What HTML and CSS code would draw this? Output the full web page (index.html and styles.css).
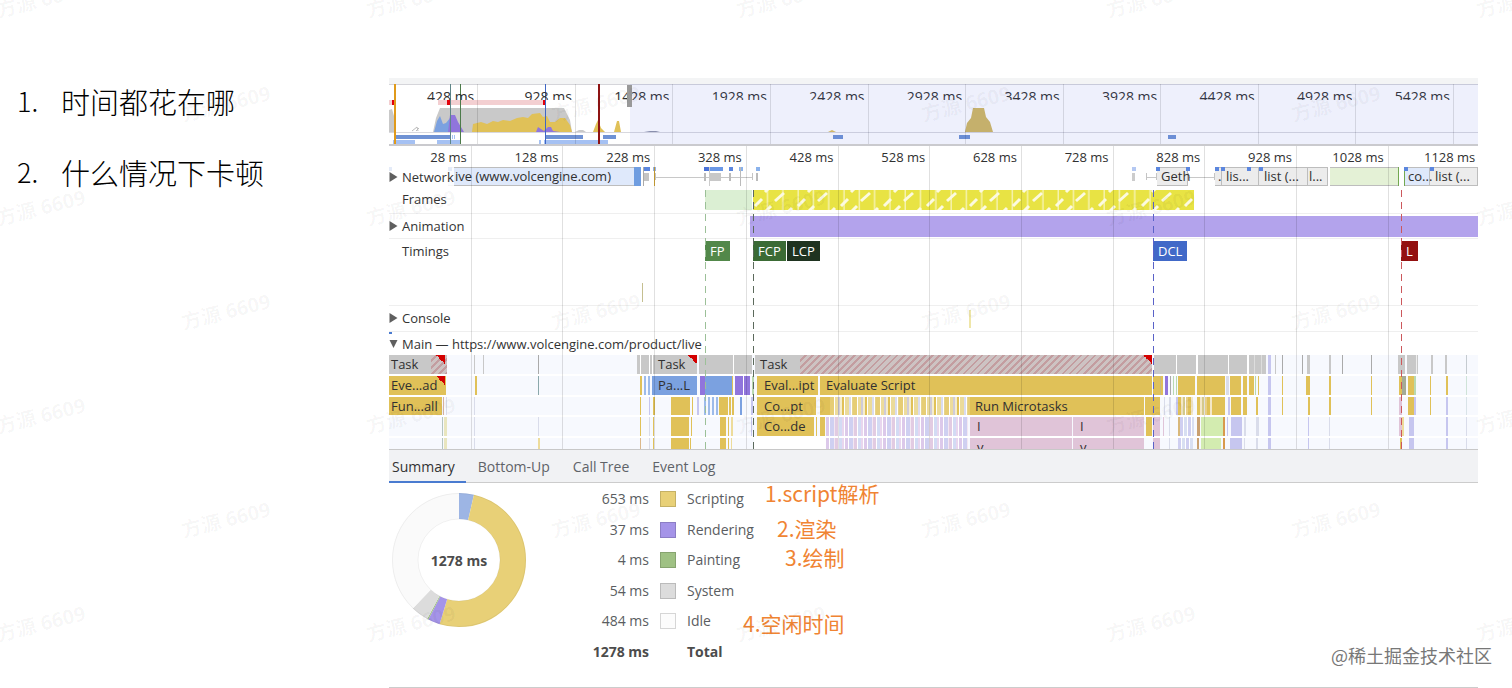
FILE: index.html
```html
<!DOCTYPE html>
<html lang="zh-CN">
<head>
    <meta charset="UTF-8">
    <meta name="viewport" content="width=device-width, initial-scale=1.0">
    <title>Performance</title>
    <link rel="stylesheet" href="styles.css">
</head>
<body>
    <main class="slide">
        <ol class="questions">
            <li>时间都花在哪</li>
            <li>什么情况下卡顿</li>
        </ol>

        <section class="panel">
            <div class="overview">
                <svg class="overview-graph" viewBox="0 0 1089 60" preserveAspectRatio="none">
                    <path fill="#c9c9c9" d="M0 26L3 25L5 32V48H0ZM44 48L47 34L51 24H175L181 36L183 48Z"/>
                    <path fill="#7ba1e0" d="M45 48L48 37L51 32L54 40L57 39L61 34L66 48Z"/>
                    <path fill="#9075dc" d="M59 48L61 31H66L69 38L75 48Z"/>
                    <path fill="#e0c158" d="M83 48L84 40L92 38L98 40L104 37L109 38L114 36L121 37L128 34L134 33L139 34L143 30L151 29L154 33L158 32L161 38L166 38L171 34L176 34L181 41L183 48Z"/>
                    <path fill="#9075dc" d="M147 48L149 43L152 45L155 47L159 43H162L164 47L171 48Z"/>
                    <path fill="#e0c158" d="M204 48L207 40L209 36L212 44L216 48ZM225 48L228 37H230L232 48ZM439 48L443 46L447 48Z"/>
                    <path fill="#c9c9c9" d="M186 48L190 46H194L197 48Z"/>
                    <path fill="#8f93a8" d="M255 48L261 47H267L271 48Z"/>
                    <path fill="none" stroke="#bbb" d="M23 47L28 43L29 47M27 47L30 44"/>
                    <path fill="#d2b85f" d="M576 48L578 39L582 34L584 24H595L597 33L601 38L604 48Z"/>
                    <path fill="#d8d8de" d="M0 48H1089V49H0Z"/>
                    <path fill="#f3cfd1" d="M0 16H4V21H0ZM49 16H155V21H49Z"/>
                    <path fill="#e3000b" d="M3 16H6V21H3ZM58 16H61V21H58ZM154 16H156V21H154Z"/>
                    <path fill="#6f92d4" d="M7 51H61V55H7ZM157 51H194V55H157ZM214 51H227V55H214ZM444 51H454V55H444ZM570 51H581V55H570ZM779 51H787V55H779Z"/>
                    <path fill="#a5c1f3" d="M4 56H26V60H4ZM48 56H71V60H48ZM150 56H152V60H150ZM155 56H219V60H155ZM63 51H64V55H63ZM65 51H66V55H65Z"/>
                    <path fill="#e09a1b" d="M5 0H7V60H5Z"/>
                    <path fill="#5e8587" d="M61 0H62V60H61Z"/>
                    <path fill="#4c7a4a" d="M71 0H72V60H71Z"/>
                    <path fill="#3f66c4" d="M156 0H157V60H156Z"/>
                    <path fill="#8e1313" d="M209 0H211V60H209Z"/>
                </svg>
                <div class="overview-labels" id="overview-labels"></div>
                <div class="overview-outside"></div>
                <div class="overview-handle"></div>
            </div>

            <div class="timeline">
                <div class="ruler" id="ruler"></div>

                <div class="track network">
                    <div class="lane" id="network"></div>
                    <button class="track-name masked"><svg viewBox="0 0 8 10"><path d="M0 0L8 5L0 10Z"/></svg>Network</button>
                </div>
                <div class="track frames">
                    <div class="lane" id="frames">
                        <svg class="dropped">
                            <defs>
                                <pattern id="dashes" width="43" height="20" patternUnits="userSpaceOnUse">
                                    <path d="M2 16L9 9M22 11L31 3M13 21L18 16M36 21L39 18M12 2L15 -1" fill="none" stroke="#fcfae0" stroke-width="3"/>
                                </pattern>
                                <pattern id="cells" width="15.3" height="20" patternUnits="userSpaceOnUse">
                                    <rect x="14" width="1" height="20" fill="#fcfae0"/>
                                </pattern>
                            </defs>
                            <rect width="100%" height="20" fill="#e8e344"/>
                            <rect width="100%" height="20" fill="url(#dashes)"/>
                            <rect width="91%" height="20" fill="url(#cells)"/>
                        </svg>
                    </div>
                    <span class="track-name">Frames</span>
                </div>
                <div class="track animation">
                    <div class="lane" id="animation"></div>
                    <button class="track-name"><svg viewBox="0 0 8 10"><path d="M0 0L8 5L0 10Z"/></svg>Animation</button>
                </div>
                <div class="track timings">
                    <div class="lane" id="timings"></div>
                    <span class="track-name">Timings</span>
                </div>
                <div class="track console">
                    <div class="lane" id="console"></div>
                    <button class="track-name"><svg viewBox="0 0 8 10"><path d="M0 0L8 5L0 10Z"/></svg>Console</button>
                </div>
                <div class="track main-track">
                    <div class="lane" id="main-top"></div>
                    <button class="track-name"><svg viewBox="0 0 8 10"><path d="M0 1H8L4 9Z"/></svg>Main — https://www.volcengine.com/product/live</button>
                </div>
                <div class="flame" id="flame"></div>
                <div class="markers" id="markers"></div>
            </div>

            <nav class="tabs">
                <button class="tab active">Summary</button>
                <button class="tab">Bottom-Up</button>
                <button class="tab">Call Tree</button>
                <button class="tab">Event Log</button>
            </nav>

            <div class="summary">
                <div class="donut">
                    <svg viewBox="0 0 134 134">
                        <g id="donut" fill="none" stroke-width="26" transform="rotate(-90 67 67)"></g>
                        <circle cx="67" cy="67" r="66.5" fill="none" stroke="#000" stroke-opacity=".05"/>
                        <circle cx="67" cy="67" r="41" fill="none" stroke="#000" stroke-opacity=".05"/>
                    </svg>
                    <strong>1278 ms</strong>
                </div>
                <table class="legend">
                    <tr><td>653 ms</td><td><i class="swatch scripting"></i></td><td>Scripting</td></tr>
                    <tr><td>37 ms</td><td><i class="swatch rendering"></i></td><td>Rendering</td></tr>
                    <tr><td>4 ms</td><td><i class="swatch painting"></i></td><td>Painting</td></tr>
                    <tr><td>54 ms</td><td><i class="swatch system"></i></td><td>System</td></tr>
                    <tr><td>484 ms</td><td><i class="swatch idle"></i></td><td>Idle</td></tr>
                    <tr class="total"><td>1278 ms</td><td></td><td>Total</td></tr>
                </table>
                <p class="note note-script">1.script解析</p>
                <p class="note note-render">2.渲染</p>
                <p class="note note-paint">3.绘制</p>
                <p class="note note-idle">4.空闲时间</p>
            </div>
        </section>
    </main>

    <div class="watermarks" id="watermarks" aria-hidden="true"></div>
    <p class="credit">@稀土掘金技术社区</p>

    <script src="script.js"></script>
</body>
</html>
```
FILE: styles.css
```css
*{
    box-sizing: border-box;
}
body{
    margin: 0;
    position: relative;
    min-height: 100vh;
    overflow: hidden;
    background-color: #fff;
    font-family: "Open Sans", "Noto Sans", "Noto Sans CJK SC", sans-serif;
    font-size: 13px;
    color: #303030;
}
button{
    border: 0;
    padding: 0;
    background: none;
    font: inherit;
    color: inherit;
}
p{
    margin: 0;
}
.slide{
    display: grid;
    grid-template-columns: 389px 1fr;
    padding: 78px 34px 0 0;
}

/* left column */
.questions{
    margin: 0;
    padding: 2px 0 0 17px;
    list-style: none;
    counter-reset: question;
    font-family: "Noto Sans CJK SC", sans-serif;
    font-size: 29px;
    font-weight: 300;
    line-height: 42px;
    color: #000;
}
.questions li{
    display: flex;
    margin-bottom: 29px;
    counter-increment: question;
}
.questions li::before{
    content: counter(question) ".";
    width: 44px;
    font-size: 27px;
}

/* overview */
.panel{
    min-width: 0;
    border-bottom: 1px solid #ccc;
}
.overview{
    position: relative;
    height: 68px;
    border-top: 6px solid #f3f4f5;
    border-bottom: 2px solid #cacace;
    box-shadow: inset 0 1px #d5d5da;
}
.overview-graph{
    display: block;
    width: 100%;
    height: 60px;
}
.overview-labels{
    position: absolute;
    inset: 0;
    display: flex;
    overflow: hidden;
    font-size: 14px;
}
.overview-labels span{
    flex: 0 0 8.96%;
    padding-right: 3px;
    border-right: 1px solid rgba(0,0,0,0.12);
    text-align: right;
}
.overview-labels span:first-child{
    flex-basis: 8.2%;
}
.overview-labels b{
    display: block;
    height: 16px;
    padding-top: 4px;
    overflow: hidden;
    font-weight: normal;
    line-height: 18px;
    white-space: nowrap;
}
.overview-outside{
    position: absolute;
    inset: 0 0 0 22.1%;
    background-color: rgba(90,110,225,0.1);
}
.overview-handle{
    position: absolute;
    left: 21.9%;
    top: 1px;
    width: 5px;
    height: 22px;
    background-color: #999;
}

/* timeline */
.timeline{
    position: relative;
    padding-top: 20px;
    border-bottom: 1px solid #c8c8c8;
}
.ruler{
    position: absolute;
    inset: 0;
    display: flex;
    overflow: hidden;
    z-index: 2;
    pointer-events: none;
}
.ruler span{
    flex: 0 0 8.42%;
    padding: 2px 4px 0 0;
    border-right: 1px solid rgba(0,0,0,0.12);
    line-height: 18px;
    text-align: right;
    white-space: nowrap;
}
.ruler span:first-child{
    flex-basis: 7.6%;
}
.track{
    display: grid;
    border-bottom: 1px solid #efefef;
}
.track > *{
    grid-area: 1 / 1;
}
.track-name{
    position: relative;
    display: flex;
    align-items: center;
    justify-self: start;
    align-self: start;
    height: 24px;
    padding-left: 13px;
    color: #333;
}
.track-name svg{
    width: 9px;
    height: 10px;
    margin: 0 4px 0 -13px;
    fill: #5f5f5f;
}
.network{
    height: 21px;
    border-bottom: 0;
}
.network .track-name{
    height: 21px;
}
.masked{
    background-color: rgba(255,255,255,0.85);
}
.frames{
    height: 27px;
}
.animation{
    height: 25px;
}
.timings{
    height: 67px;
}
.console{
    height: 26px;
}
.main-track{
    height: 23px;
    border-bottom: 0;
}
.lane{
    position: relative;
    overflow: hidden;
}
.lane i, .flame i, .markers i{
    position: absolute;
    top: 0;
    height: 100%;
}
.lane span, .flame span{
    position: absolute;
    top: 0;
    line-height: 19px;
    white-space: nowrap;
}
.network i{
    top: 1px;
    height: 19px;
}
.network span{
    top: 1px;
}
.network .dot{
    height: 4px;
}
.network .wait{
    top: 7px;
    height: 8px;
}
.network .whisker{
    top: 7px;
    height: 7px;
    border: solid #c4c4c4;
    border-width: 0 1px;
    background: linear-gradient(#c8c8c8, #c8c8c8) 0 4px / 100% 1px no-repeat;
}
.network .request{
    border: 1px solid #bdbdbd;
    border-width: 1px 1px 1px 0;
}
.frames i{
    top: 3px;
    height: 20px;
}
.dropped{
    position: absolute;
    left: 33.43%;
    top: 3px;
    width: 40.5%;
    height: 20px;
}
.animation i{
    top: 2px;
    height: 21px;
}
.timings .measure{
    top: 44px;
    height: 19px;
}
.timings .badge{
    top: 2px;
    padding: 0 5px;
    line-height: 20px;
    color: #fff;
}
.console i{
    top: 4px;
    height: 18px;
}
.main-track i{
    height: 2px;
}

/* flame chart */
.flame{
    display: grid;
    grid-template-rows: 21px 21px 20px 21px 11px;
    overflow: hidden;
    background-color: #f7f9fe;
}
.row{
    position: relative;
    overflow: hidden;
    border-bottom: 2px solid #fff;
}
.row:last-child{
    border-bottom: 0;
}
.hatched{
    background-image: repeating-linear-gradient(135deg, #cdc3c3 0 3px, #c39da0 3px 5px);
}
.flame .corner{
    height: 9px;
    background: linear-gradient(to top right, transparent 50%, #d30000 50%);
}
.stripes-parse{
    background-image: repeating-linear-gradient(90deg, #9dbbea 0 2px, #f7f9fe 2px 4px);
}
.stripes-script{
    background-image: repeating-linear-gradient(90deg, #e6cd75 0 4px, #fff 4px 5px, #eddc9b 5px 8px, #d0ccd8 8px 10px, #f5edcd 10px 12px, #e0c158 12px 14px, #fff 14px 15px, #ebdb9a 15px 19px, #d9dcef 19px 21px, #fff 21px 22px, #e6d38a 22px 23px);
}
.stripes-call{
    background-image: repeating-linear-gradient(90deg, #dcc9ea 0 3px, #fff 3px 4px, #cfd0f1 4px 8px, #f3e7f2 8px 9px, #e2cbe2 9px 12px, #fff 12px 13px, #d3dbf4 13px 16px, #e8d6ee 16px 18px, #fff 18px 19px);
}
.stripes-mixed{
    background-image: repeating-linear-gradient(90deg, #e0c158 0 3px, #f3e7c8 3px 5px, #d5c98b 5px 7px, #fff 7px 8px, #e8cf86 8px 10px);
}
.stripes-lilac{
    background-image: repeating-linear-gradient(90deg, #cfcff1 0 3px, #fff 3px 4px, #d8dff2 4px 7px, #fff 7px 8px);
}
.markers{
    position: absolute;
    inset: 44px 0 0;
    pointer-events: none;
    z-index: 3;
}
.markers i{
    width: 1px;
    -webkit-mask-image: repeating-linear-gradient(#000 0 7px, transparent 7px 12px);
    mask-image: repeating-linear-gradient(#000 0 7px, transparent 7px 12px);
}

/* tabs */
.tabs{
    display: flex;
    height: 33px;
    border-bottom: 1px solid #ccc;
    background-color: #f1f2f4;
    font-size: 14px;
    color: #5f6368;
}
.tab{
    height: 33px;
    padding: 2px 11px 0 12px;
    border-bottom: 2px solid transparent;
}
.tab.active{
    padding-left: 3px;
    border-color: #4a7bd0;
    color: #333;
}

/* summary */
.summary{
    position: relative;
    display: flex;
    gap: 59px;
    height: 204px;
    padding: 1px 0 0 3px;
    font-size: 14px;
    color: #5a5d61;
}
.donut{
    display: grid;
    align-self: start;
    width: 134px;
    margin-top: 9px;
    place-items: center;
}
.donut > *{
    grid-area: 1 / 1;
}
.donut svg{
    width: 100%;
}
.donut strong{
    color: #4c4c4c;
}
.legend{
    align-self: start;
    border-collapse: collapse;
}
.legend td{
    height: 30px;
    padding: 0;
    line-height: 20px;
}
.legend tr:nth-child(even) td{
    height: 31px;
}
.legend td:first-child{
    width: 64px;
    text-align: right;
    white-space: nowrap;
}
.legend td:nth-child(2){
    padding: 0 11px;
    width: 38px;
}
.total{
    font-weight: bold;
    color: #4c4c4c;
}
.swatch{
    display: block;
    width: 16px;
    height: 16px;
    border: 1px solid rgba(0,0,0,0.15);
}
.scripting{
    background-color: #e8d077;
}
.rendering{
    background-color: #a594e8;
}
.painting{
    background-color: #9fc184;
}
.system{
    background-color: #dcdcdc;
}
.idle{
    background-color: #fcfcfc;
}
.note{
    position: absolute;
    font-family: "Noto Sans CJK SC", sans-serif;
    font-size: 21px;
    line-height: 24px;
    color: #f08433;
}
.note-script{
    left: 376px;
    top: -2px;
}
.note-render{
    left: 388px;
    top: 33px;
}
.note-paint{
    left: 396px;
    top: 62px;
}
.note-idle{
    left: 354px;
    top: 128px;
}

/* watermarks */
.watermarks{
    position: absolute;
    inset: -52px 0 0 -144px;
    overflow: hidden;
    pointer-events: none;
    z-index: 4;
}
.watermark-row{
    display: flex;
    height: 104px;
}
.watermark-row:nth-child(even){
    margin-left: 185px;
}
.watermark-row span{
    flex: 0 0 370px;
    font-size: 20px;
    font-weight: bold;
    line-height: 104px;
    text-align: center;
    color: rgba(0,0,0,0.04);
    transform: rotate(-14deg);
}
.credit{
    position: absolute;
    right: 20px;
    bottom: 20px;
    font-family: "Noto Sans CJK SC", sans-serif;
    font-size: 18px;
    line-height: 26px;
    color: #777;
}
```
FILE: script.js
```js
const TOTAL = 1089;
const script = "#e0c158", task = "#c8c8c8", parse = "#7ba1e0", render = "#9075dc";
const lilac = "#c6c6ef", call = "#e0c4d8", pale = "#d9dcea", green = "#b9d9b0";

// bar: [start, width, color, class], label: [start, text]
const tracks = {
    network: {
        bars: [
            [59, 193, "#dfe9fb", "request"], [245, 7, "#6f9de0"], [0, 3, "#4a7bd0", "dot"], [59, 4, "#4a7bd0", "dot"],
            [254, 7, "#5b86de", "dot"], [264, 3, "#8fb0ea", "dot"], [254, 1, "#aaa"], [255, 5, "#c4c4c4", "wait"], [265, 1, "#d9ab3a"],
            [266, 98, "", "whisker"], [315, 5, "#4a72d8", "dot"], [321, 13, "#6b98e6", "dot"], [340, 4, "#5b86de", "dot"], [350, 4, "#8ab2ec", "dot"], [367, 4, "#8ab2ec", "dot"],
            [315, 2, "#bbb", "wait"], [321, 11, "#c8c8c8", "wait"], [320, 1, "#ccc"], [340, 2, "#bbb", "wait"], [351, 1, "#bbb"], [367, 2, "#bbb", "wait"],
            [743, 4, "#b4c8f2", "dot"], [743, 3, "#ccc", "wait"], [757, 11, "", "whisker"], [799, 27, "", "whisker"],
            [768, 31, "#ececec", "request"], [826, 7, "#ececec", "request"], [833, 37, "#ececec", "request"], [870, 49, "#ececec", "request"], [919, 20, "#ececec", "request"],
            [941, 69, "#e4f1d6", "request"], [1009, 1, "#72a850"], [1015, 26, "#dfe9fb", "request"], [1015, 1, "#72a850"], [1041, 48, "#ececec", "request"],
            [767, 4, "#5b86de", "dot"], [797, 4, "#5b86de", "dot"], [826, 4, "#5b86de", "dot"], [832, 4, "#5b86de", "dot"], [858, 4, "#5b86de", "dot"], [870, 4, "#5b86de", "dot"], [1015, 4, "#5b86de", "dot"], [1041, 4, "#5b86de", "dot"]
        ],
        labels: [[66, "ive (www.volcengine.com)"], [772, "Geth"], [829, "."], [837, "lis..."], [875, "list (..."], [920, "l..."], [1019, "co..."], [1046, "list (..."]]
    },
    frames: { bars: [[316, 47, "#dbefd3"]] },
    animation: { bars: [[361, 728, "#b3a3ec"]] },
    timings: { bars: [[253, 1, "#c5bf90", "measure"]] },
    console: { bars: [[580, 2, "#efe6a8"]] },
    "main-top": { bars: [[0, 3, "#4a7bd0"]] }
};

const flame = [
    {
        bars: [
            [0, 42, task], [42, 16, "", "hatched"], [47, 9, "", "corner"], [85, 1, task], [94, 1, task], [149, 1, "#aaa"],
            [248, 60, task], [251, 1, "#fff"], [260, 1, "#fff"], [263, 1, "#fff"], [299, 9, "", "corner"],
            [310, 53, task], [344, 1, "#fff"], [366, 45, task], [411, 352, "", "hatched"], [754, 9, "", "corner"],
            [765, 112, task], [787, 1, "#fff"], [807, 2, "#fff"], [839, 1, "#fff"], [858, 2, "#fff"], [865, 1, "#ddd"], [872, 1, "#ddd"],
            [879, 3, lilac], [886, 1, task], [893, 1, "#aaa"], [913, 1, "#aaa"], [918, 3, task], [940, 2, task], [953, 1, "#aaa"], [982, 1, "#aaa"],
            [1009, 7, task], [1018, 11, task], [1027, 1, "#eee"], [1042, 2, task], [1056, 2, task], [1077, 1, "#c5cbd0"]
        ],
        labels: [[2, "Task"], [269, "Task"], [371, "Task"]]
    },
    {
        bars: [
            [0, 57, script], [47, 9, "", "corner"], [86, 2, script], [149, 1, "#8ba8ab"],
            [251, 2, script], [255, 6, "", "stripes-parse"], [263, 45, parse], [311, 5, render], [316, 28, parse], [343, 1, script], [346, 15, render], [354, 1, "#fff"], [363, 2, green],
            [368, 61, script], [431, 332, script], [764, 10, script], [771, 1, "#c9b985"], [776, 3, render], [781, 1, "#aaa"], [784, 1, green], [787, 1, green],
            [789, 17, script], [808, 28, script], [837, 3, pale], [841, 11, script], [854, 4, script], [860, 5, script], [866, 1, green], [869, 1, script],
            [879, 3, lilac], [893, 1, script], [917, 4, script], [940, 2, script], [982, 1, script],
            [1010, 3, script], [1013, 4, "#a5ab96"], [1019, 6, script], [1025, 2, green], [1041, 1, script], [1057, 2, script], [1077, 1, "#cfe3d8"]
        ],
        labels: [[2, "Eve...ad"], [269, "Pa...L"], [375, "Eval...ipt"], [437, "Evaluate Script"]]
    },
    {
        bars: [
            [0, 53, script], [54, 1, "#d6b0a0"], [57, 1, pale], [85, 1, pale], [251, 1, script], [260, 1, lilac], [264, 2, script],
            [282, 19, script], [303, 1, script], [308, 2, lilac], [315, 14, "", "stripes-parse"], [330, 9, script], [340, 2, script], [343, 2, script], [351, 2, parse], [362, 2, lilac],
            [368, 59, script], [431, 10, script], [441, 140, "", "stripes-script"], [581, 174, script], [756, 15, script], [775, 1, pale], [780, 2, pale], [787, 2, lilac],
            [789, 15, "", "stripes-mixed"], [808, 15, "", "stripes-mixed"], [823, 13, script], [839, 2, lilac], [842, 10, script], [854, 4, script], [867, 2, script],
            [879, 3, lilac], [893, 1, script], [919, 2, script], [940, 2, script], [982, 1, script], [1010, 3, call], [1019, 6, script], [1025, 2, lilac], [1041, 1, script], [1057, 2, lilac], [1077, 1, "#d9e3e8"]
        ],
        labels: [[2, "Fun...all"], [375, "Co...pt"], [586, "Run Microtasks"]]
    },
    {
        bars: [
            [53, 1, "#b5c5c0"], [55, 3, "#e9e6bf"], [85, 1, pale], [149, 1, pale], [251, 1, script], [260, 1, pale], [264, 1, script],
            [282, 18, script], [302, 1, script], [331, 6, script], [339, 1, script], [342, 2, "#eddc9b"], [362, 1, lilac],
            [368, 57, script], [427, 1, script], [431, 5, script], [437, 142, "", "stripes-call"], [581, 102, call], [684, 71, call], [757, 6, script], [764, 7, call],
            [774, 1, call], [780, 1, pale], [789, 2, "#d8b87b"], [791, 14, "", "stripes-lilac"], [808, 3, "#c9a070"], [812, 22, "#d3ecb0"], [834, 2, "#d89a4c"], [838, 1, lilac],
            [842, 11, lilac], [855, 2, pale], [867, 3, pale], [879, 3, lilac], [919, 1, lilac], [940, 1, pale], [1010, 3, call], [1013, 2, "#eddc9b"], [1020, 5, lilac], [1057, 2, lilac], [1077, 1, pale]
        ],
        labels: [[375, "Co...de"], [588, "I"], [691, "I"]]
    },
    {
        bars: [
            [53, 1, "#b5c5c0"], [55, 3, "#e9e6bf"], [85, 1, pale], [149, 2, "#eddc9b"], [251, 1, "#dbb88b"], [260, 1, pale], [264, 1, script],
            [282, 18, script], [301, 1, script], [331, 6, script], [339, 1, script], [342, 1, "#eddc9b"], [365, 72, "#fff"],
            [437, 142, "", "stripes-call"], [581, 102, call], [684, 71, call], [764, 7, call], [780, 1, pale],
            [789, 15, "", "stripes-lilac"], [808, 2, "#c9a070"], [812, 20, "#d3ecb0"], [834, 2, "#d89a4c"], [841, 12, lilac], [855, 1, pale], [867, 2, pale],
            [879, 3, lilac], [919, 1, lilac], [940, 1, pale], [1011, 2, script], [1020, 5, lilac], [1057, 2, lilac], [1077, 1, pale]
        ],
        labels: [[588, "v"], [691, "v"]]
    }
];

const percent = (value) => `${value / TOTAL * 100}%`;

const drawLane = (lane, data) => {
    data.bars.forEach(([start, width, color, name]) => {
        const bar = document.createElement("i");
        bar.style.left = percent(start);
        bar.style.width = percent(width);
        if (color) bar.style.backgroundColor = color;
        if (name) bar.className = name;
        lane.append(bar);
    });
    (data.labels || []).forEach(([start, text]) => {
        const label = document.createElement("span");
        label.style.left = percent(start);
        label.textContent = text;
        lane.append(label);
    });
};

for (const id in tracks) {
    drawLane(document.getElementById(id), tracks[id]);
}

flame.forEach((data) => {
    const row = document.createElement("div");
    row.className = "row";
    drawLane(row, data);
    document.getElementById("flame").append(row);
});

[[316, "FP", "#52884a"], [364, "FCP", "#3b6b35"], [398, "LCP", "#1f3320"], [764, "DCL", "#4169c8"], [1012, "L", "#931010"]].forEach(([start, text, color]) => {
    const badge = document.createElement("span");
    badge.className = "badge";
    badge.style.left = percent(start);
    badge.style.backgroundColor = color;
    badge.textContent = text;
    document.getElementById("timings").append(badge);
});

drawLane(document.getElementById("markers"), {
    bars: [[316, 1, "#9cc098"], [364, 1, "#5c6a5c"], [764, 1, "#5a62c8"], [1012, 1, "#cc585c"]]
});

for (let ms = 428; ms <= 5428; ms += 500) {
    document.getElementById("overview-labels").innerHTML += `<span><b>${ms} ms</b></span>`;
}
for (let ms = 28; ms <= 1128; ms += 100) {
    document.getElementById("ruler").innerHTML += `<span>${ms} ms</span>`;
}

// loading, scripting, rendering, painting, system, idle
let offset = 0;
[[46, "#9db5e4"], [653, "#e8d077"], [37, "#a594e8"], [4, "#9fc184"], [54, "#dcdcdc"], [484, "#fafafa"]].forEach(([value, color]) => {
    document.getElementById("donut").innerHTML +=
        `<circle cx="67" cy="67" r="54" pathLength="1278" stroke="${color}" stroke-dasharray="${value} ${1278 - value}" stroke-dashoffset="${-offset}"/>`;
    offset += value;
});

for (let i = 0; i < 7; i++) {
    document.getElementById("watermarks").innerHTML +=
        `<div class="watermark-row">${"<span>方源 6609</span>".repeat(5)}</div>`;
}
```
